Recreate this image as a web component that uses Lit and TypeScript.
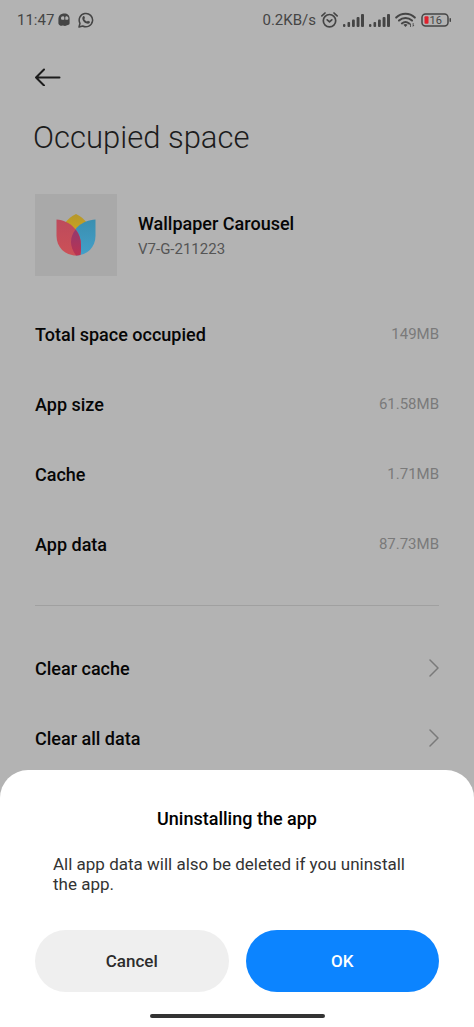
import { LitElement, html, css, svg } from "lit";
import { customElement } from "lit/decorators.js";

const signalBars = svg`
  <rect x="0" y="12" width="2.4" height="3" rx="1"/>
  <rect x="4.5" y="10" width="2.6" height="5" rx="1"/>
  <rect x="9" y="7.5" width="2.8" height="7.5" rx="1"/>
  <rect x="13.6" y="5" width="2.9" height="10" rx="1"/>
  <rect x="18" y="2" width="3" height="13" rx="1"/>`;

@customElement("status-bar")
export class StatusBar extends LitElement {
  static styles = css`
    :host {
      display: flex;
      justify-content: space-between;
      align-items: center;
      height: 40px;
      padding: 0 22px 0 17px;
      color: #454545;
      font-size: 15px;
    }
    .group {
      display: flex;
      align-items: center;
      gap: 5px;
    }
    .left {
      gap: 4px;
    }
    svg {
      display: block;
      fill: currentColor;
    }
    .line {
      fill: none;
      stroke: currentColor;
    }
    .level {
      fill: #e0202c;
    }
    .percent {
      font-size: 11px;
    }
    .chat {
      margin-left: 4px;
    }
  `;

  render() {
    return html`
      <div class="group left">
        <span>11:47</span>
        <svg width="12" height="14" viewBox="0 0 12 14" aria-hidden="true">
          <path fill-rule="evenodd" d="M6.300.4C9.700.4 11.600 2.400 11.600 5.500V10C11.600 11.400 10.900 11.900 9.800 12C8.700 12.100 8.200 12.900 7 12.900C5.900 12.900 5.500 12.300 4.500 12.600C3.500 12.900 2.600 12.900 1.700 12.300C.8 11.700.4 11 .4 10V6.200C.4 2.500 2.800.4 6.300.4ZM4.900 3.200C3.700 3.200 3 4.100 3 5.200S3.600 6.800 4.600 6.800H5.500C6.100 6.800 6.300 6.500 6.300 5.900V4.700C6.300 3.700 5.800 3.200 4.900 3.200ZM8.600 3.200C7.700 3.200 7.300 3.700 7.300 4.700V5.900C7.300 6.500 7.500 6.800 8.100 6.800H8.900C9.900 6.800 10.400 6.200 10.400 5.200S9.700 3.200 8.600 3.200Z"/>
        </svg>
        <svg class="chat" width="16" height="16" viewBox="0 0 16 16" aria-hidden="true">
          <path class="line" stroke-width="1.500" stroke-linejoin="round" d="M1 15L2 11.300A6.700 6.700 0 1 1 4.700 14Z"/>
          <path d="M5.200 4.200C5.600 3.800 6.100 3.900 6.300 4.300L6.900 5.700C7 6 6.900 6.300 6.300 6.900C6.900 8.200 7.800 9 9.100 9.600C9.700 8.900 9.900 8.700 10.300 8.900L11.700 9.600C12.100 9.800 12 10.500 11.600 11C10.800 11.900 9.500 11.900 8 11.200C6.500 10.500 5.300 9.200 4.700 7.900C4 6.400 4.300 5 5.200 4.200Z"/>
        </svg>
      </div>
      <div class="group">
        <span>0.2KB/s</span>
        <svg width="17" height="16" viewBox="0 0 17 16" aria-hidden="true">
          <g class="line" stroke-width="1.700" stroke-linecap="round" stroke-linejoin="round">
            <circle cx="8.500" cy="8.700" r="6.200"/>
            <path d="M6.200 7.800L8.500 9.800L10.800 7.800M.9 3.900L4 1M16.100 3.900L13 1"/>
          </g>
        </svg>
        <svg width="21" height="16" viewBox="0 0 21 16" aria-hidden="true">${signalBars}</svg>
        <svg width="21" height="16" viewBox="0 0 21 16" aria-hidden="true">${signalBars}</svg>
        <svg width="21" height="16" viewBox="0 0 21 16" aria-hidden="true">
          <g class="line" stroke-width="2" stroke-linecap="round">
            <path d="M1.200 5.600C6.500.6 14.500.6 19.800 5.600M4 8.600C7.800 5.200 13.200 5.200 17 8.600M6.900 11.400C9.100 9.600 11.900 9.600 14.100 11.400"/>
          </g>
          <path d="M8.400 12.700Q10.500 11.300 12.600 12.700L10.500 15ZM14.200 13L15.900 11V15H15.100V13ZM19.400 13L17.700 15V11H18.500V13Z"/>
        </svg>
        <svg width="31" height="14" viewBox="0 0 31 14" role="img" aria-label="Battery 16%">
          <rect class="line" x="1" y="1" width="26" height="12" rx="3.500" stroke-width="1.500"/>
          <rect class="level" x="3.500" y="3.200" width="4" height="7.600" rx="1"/>
          <rect x="28.500" y="5" width="1.500" height="4" rx=".7"/>
          <text class="percent" x="8.500" y="11">16</text>
        </svg>
      </div>
    `;
  }
}

@customElement("confirm-sheet")
export class ConfirmSheet extends LitElement {
  static styles = css`
    :host {
      display: block;
      box-sizing: border-box;
      padding: 36px 35px 9px;
      border-radius: 28px 28px 0 0;
      background: #fff;
      color: #000;
    }
    .title {
      margin: 0;
      font-size: 18px;
      line-height: 26px;
      font-weight: 500;
      text-align: center;
    }
    .message {
      margin: 22px 18px 36px;
      color: #333;
      font-size: 17px;
      line-height: 20px;
    }
    .actions {
      display: grid;
      grid-template-columns: 1fr 1fr;
      gap: 17px;
    }
    .button {
      height: 62px;
      padding: 0;
      border: 0;
      border-radius: 31px;
      background: #efefef;
      color: #2c2c2c;
      font: inherit;
      font-size: 17px;
      font-weight: 500;
    }
    .primary {
      background: #0c84ff;
      color: #fff;
    }
    .handle {
      width: 175px;
      height: 4px;
      margin: 22px auto 0;
      border-radius: 2px;
      background: #333;
    }
  `;

  render() {
    return html`
      <h2 class="title">Uninstalling the app</h2>
      <p class="message">All app data will also be deleted if you uninstall the app.</p>
      <div class="actions">
        <button class="button" type="button">Cancel</button>
        <button class="button primary" type="button">OK</button>
      </div>
      <div class="handle"></div>
    `;
  }
}

@customElement("app-root")
export class AppRoot extends LitElement {
  static styles = css`
    :host {
      display: block;
      box-sizing: border-box;
      min-height: 100vh;
      background: #b3b3b3;
      color: #060606;
      font-family: Roboto, sans-serif;
    }
    .page {
      padding: 18px 35px 0;
    }
    .back {
      display: block;
      padding: 10px 0;
      border: 0;
      background: none;
      color: #1c1c1c;
    }
    svg {
      display: block;
    }
    .line {
      fill: none;
      stroke: currentColor;
    }
    .heading {
      margin: 21px -2px 36px;
      color: #1c1c1c;
      font-size: 31px;
      line-height: 41px;
      font-weight: 300;
    }
    .app {
      display: flex;
      align-items: center;
      gap: 21px;
      margin-bottom: 23px;
    }
    .icon {
      display: grid;
      place-items: center;
      width: 82px;
      height: 82px;
      background: #a9a9a9;
    }
    .about {
      padding-top: 2px;
    }
    .name {
      margin: 0;
      font-size: 18px;
      line-height: 26px;
      font-weight: 500;
    }
    .version {
      margin: 0;
      color: #555;
      font-size: 15px;
      line-height: 24px;
    }
    .list {
      margin: 0;
      padding: 0;
      list-style: none;
    }
    .row {
      display: flex;
      align-items: center;
      justify-content: space-between;
      box-sizing: border-box;
      width: 100%;
      height: 70px;
      padding: 0;
      border: 0;
      background: none;
      color: inherit;
      font: inherit;
      font-size: 18px;
      font-weight: 500;
    }
    .value {
      margin: 0;
      color: #7a7a7a;
      font-size: 15px;
      font-weight: 400;
    }
    .divider {
      height: 1px;
      margin: 26px 0 27px;
      border: 0;
      background: #a0a0a0;
    }
    .chevron {
      color: #7a7a7a;
    }
    .sheet {
      position: fixed;
      left: 0;
      right: 0;
      bottom: 0;
    }
  `;

  private sizes = [
    ["Total space occupied", "149MB"],
    ["App size", "61.58MB"],
    ["Cache", "1.71MB"],
    ["App data", "87.73MB"],
  ];

  private actions = ["Clear cache", "Clear all data"];

  render() {
    return html`
      <status-bar></status-bar>
      <main class="page">
        <button class="back" type="button" aria-label="Back">
          <svg width="26" height="18" viewBox="0 0 26 18">
            <path class="line" stroke-width="2" stroke-linecap="round" stroke-linejoin="round" d="M9 1.500L1 9.500L9 17.500M1 9.500H24.500"/>
          </svg>
        </button>
        <h1 class="heading">Occupied space</h1>
        <section class="app">
          <div class="icon">
            <svg width="40" height="42" viewBox="0 0 40 42" aria-hidden="true">
              <defs>
                <linearGradient id="gold" x1="0" y1="0" x2="0" y2="1">
                  <stop offset="0" stop-color="#b5972c"/>
                  <stop offset="1" stop-color="#cfa71c"/>
                </linearGradient>
                <linearGradient id="rose" x1="0" y1="0" x2="0" y2="1">
                  <stop offset="0" stop-color="#bd4a5c"/>
                  <stop offset="1" stop-color="#cc5157"/>
                </linearGradient>
                <linearGradient id="sky" x1="0" y1="0" x2="0" y2="1">
                  <stop offset="0" stop-color="#3a8fb0"/>
                  <stop offset="1" stop-color="#439fc9"/>
                </linearGradient>
                <linearGradient id="blend" x1="0" y1="0" x2="0" y2="1">
                  <stop offset="0" stop-color="#93396f"/>
                  <stop offset="1" stop-color="#bb3350"/>
                </linearGradient>
              </defs>
              <path fill="url(#gold)" d="M20 0C24.500 2.200 28 5 31 9L20 21L9 9C12 5 15.500 2.200 20 0Z"/>
              <path fill="url(#sky)" d="M39.500 5.500V22C39.500 33 31 41.500 20 41.500C16.500 37 15 32 15 28C15 15 26 6.500 39.500 5.500Z"/>
              <path fill="url(#rose)" d="M.5 5.500C14 6.500 25 17 25 31C25 35 25 38 24.300 41C22.900 41.300 21.500 41.500 20 41.500C9 41.500.5 33 .5 22Z"/>
              <path fill="url(#blend)" d="M19.600 15.500C23.200 20 25 25 25 31C25 35 25 38 24.300 41C22.900 41.300 21.500 41.500 20 41.500C16.500 37 15 32 15 28C15 23 16.800 19 19.600 15.500Z"/>
            </svg>
          </div>
          <div class="about">
            <h2 class="name">Wallpaper Carousel</h2>
            <p class="version">V7-G-211223</p>
          </div>
        </section>
        <dl class="list">
          ${this.sizes.map(
            ([label, value]) => html`
              <div class="row">
                <dt>${label}</dt>
                <dd class="value">${value}</dd>
              </div>
            `
          )}
        </dl>
        <hr class="divider" />
        <ul class="list">
          ${this.actions.map(
            (label) => html`
              <li>
                <button class="row" type="button">
                  <span>${label}</span>
                  <svg class="chevron" width="10" height="18" viewBox="0 0 10 18" aria-hidden="true">
                    <path class="line" stroke-width="1.500" stroke-linecap="round" stroke-linejoin="round" d="M1 1L9 9L1 17"/>
                  </svg>
                </button>
              </li>
            `
          )}
        </ul>
      </main>
      <confirm-sheet class="sheet" role="dialog" aria-modal="true" aria-label="Uninstalling the app"></confirm-sheet>
    `;
  }
}
